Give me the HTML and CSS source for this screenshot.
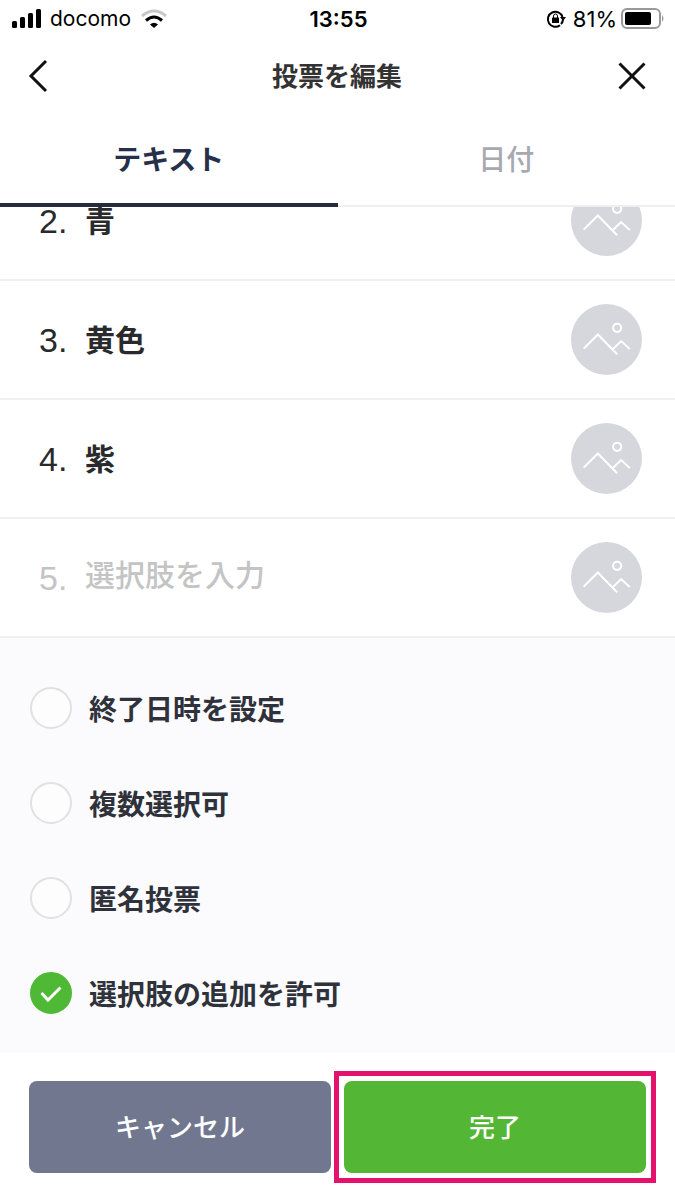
FILE: index.html
```html
<!DOCTYPE html>
<html lang="ja">
<head>
<meta charset="utf-8">
<meta name="viewport" content="width=device-width, initial-scale=1">
<title>投票を編集</title>
<link rel="stylesheet" href="styles.css">
</head>
<body>
<svg class="defs" aria-hidden="true">
  <symbol id="photo" viewBox="0 0 70 70">
    <path d="M12.500 44 26.500 30 45.500 49.500M40.500 45 49.500 36.500 58 44.500"/>
    <circle cx="45.500" cy="23.500" r="4"/>
  </symbol>
</svg>
<div class="app">
  <div class="status">
    <div class="status-side">
      <svg class="signal" viewBox="0 0 30 20" aria-hidden="true">
        <rect x="0" y="12" width="5" height="7" rx="1.500"/><rect x="8" y="8" width="5" height="11" rx="1.500"/><rect x="16" y="4" width="5" height="15" rx="1.500"/><rect x="24" y="0" width="5" height="19" rx="1.500"/>
      </svg>
      <span class="carrier">docomo</span>
      <svg class="wifi" viewBox="0 0 26 20" aria-hidden="true">
        <path class="wifi-off" d="M1 7Q13-3 25 7"/>
        <path class="wifi-on" d="M5 11.500Q13 4.500 21 11.500"/>
        <path d="M13 19 9 15.500Q13 12 17 15.500Z"/>
      </svg>
    </div>
    <time class="clock">13:55</time>
    <div class="status-side status-right">
      <svg class="lock" viewBox="0 0 20 20" aria-hidden="true">
        <path class="line" d="M14 16.200A7.500 7.500 0 1 1 16.500 8"/>
        <path class="line" d="M17 11A7.500 7.500 0 0 1 15 15"/>
        <path d="M14 8H20L17 12Z"/>
        <rect x="6" y="8.500" width="7" height="5.500" rx=".5"/>
        <path class="shackle" d="M7.500 9V7Q7.500 5 9.500 5T11.500 7V9"/>
      </svg>
      <span>81%</span>
      <svg class="battery" viewBox="0 0 44 22" aria-hidden="true">
        <rect class="shell" x="1" y="1" width="38" height="19" rx="5"/>
        <rect x="4" y="4" width="26" height="13" rx="2"/>
        <path class="cap" d="M41 7Q44 10.500 41 14Z"/>
      </svg>
    </div>
  </div>
  <header class="nav">
    <button class="icon-button" type="button" aria-label="戻る"><svg class="back" viewBox="0 0 20 34" aria-hidden="true"><path d="M18 2 3 17 18 32"/></svg></button>
    <h1>投票を編集</h1>
    <button class="icon-button" type="button" aria-label="閉じる"><svg class="close" viewBox="0 0 28 28" aria-hidden="true"><path d="M1.500 1.500 26.500 26.500M26.500 1.500 1.500 26.500"/></svg></button>
  </header>
  <div class="tabs" role="tablist">
    <button class="tab active" type="button" role="tab" aria-selected="true">テキスト</button>
    <button class="tab" type="button" role="tab" aria-selected="false">日付</button>
  </div>
  <main class="choices">
    <div class="choice"><label for="c2">2.</label><input id="c2" type="text" value="青"><button class="photo" type="button" aria-label="画像を追加"><svg><use href="#photo"/></svg></button></div>
    <div class="choice"><label for="c3">3.</label><input id="c3" type="text" value="黄色"><button class="photo" type="button" aria-label="画像を追加"><svg><use href="#photo"/></svg></button></div>
    <div class="choice"><label for="c4">4.</label><input id="c4" type="text" value="紫"><button class="photo" type="button" aria-label="画像を追加"><svg><use href="#photo"/></svg></button></div>
    <div class="choice empty"><label for="c5">5.</label><input id="c5" type="text" placeholder="選択肢を入力"><button class="photo" type="button" aria-label="画像を追加"><svg><use href="#photo"/></svg></button></div>
  </main>
  <section class="options">
    <label class="option"><input type="checkbox"><span>終了日時を設定</span></label>
    <label class="option"><input type="checkbox"><span>複数選択可</span></label>
    <label class="option"><input type="checkbox"><span>匿名投票</span></label>
    <label class="option"><input type="checkbox" checked><span>選択肢の追加を許可</span><svg class="tick" viewBox="0 0 42 42" aria-hidden="true"><path d="M11.500 21 18 28 30.500 15.500"/></svg></label>
  </section>
  <footer class="actions">
    <button class="action cancel" type="button">キャンセル</button>
    <button class="action done" type="button">完了</button>
  </footer>
</div>
</body>
</html>
```

FILE: styles.css
```css
* { box-sizing: border-box; }
body {
  margin: 0;
  background: #fff;
  color: #2a2a2c;
  font-family: "Liberation Sans", "Noto Sans CJK JP", sans-serif;
}
button, input { margin: 0; padding: 0; border: 0; background: none; font: inherit; color: inherit; }
svg { display: block; flex: none; }
.defs { position: absolute; width: 0; height: 0; }
.app { display: flex; flex-direction: column; height: 100vh; }

.status {
  display: grid;
  grid-template-columns: 1fr auto 1fr;
  align-items: center;
  height: 37px;
  padding: 0 10px 0 12px;
  color: #000;
  font: 22px/28px Inter, sans-serif;
}
.status-side { display: flex; align-items: center; gap: 8px; }
.status-right { justify-content: flex-end; gap: 4px; }
.carrier { font-size: 21px; }
.clock { font-weight: 600; }
.signal { width: 30px; height: 20px; }
.wifi { width: 26px; height: 20px; margin-left: 2px; }
.wifi path, .lock path { fill: #000; }
.wifi .wifi-off, .wifi .wifi-on { fill: none; stroke: #000; stroke-width: 3; }
.wifi .wifi-off { stroke: #c8c8c8; }
.lock { width: 20px; height: 20px; margin-right: 3px; }
.lock .line, .lock .shackle { fill: none; stroke: #000; stroke-width: 2; }
.lock .shackle { stroke-width: 1; }
.battery { width: 44px; height: 22px; }
.battery .shell { fill: none; stroke: #999; stroke-width: 2; }
.battery .cap { fill: #999; }

.nav {
  display: flex;
  align-items: center;
  justify-content: space-between;
  height: 77px;
  padding: 0 29px 0 28px;
}
.nav h1 { margin: 0; padding-top: 3px; font-size: 26px; line-height: 40px; font-weight: 700; color: #333; }
.icon-button { display: flex; width: 30px; }
.icon-button:last-child { justify-content: flex-end; }
.icon-button path { fill: none; stroke: #111; stroke-width: 3; }
.back { width: 20px; height: 34px; }
.close { width: 28px; height: 28px; }

.tabs { display: flex; height: 93px; border-bottom: 2px solid #efefef; }
.tab {
  flex: 1;
  height: 93px;
  padding-bottom: 2px;
  border-bottom: 4px solid transparent;
  color: #a8a9ae;
  font-size: 28px;
  font-weight: 500;
}
.tab.active { border-color: #252c3d; color: #26304a; font-weight: 700; }

.choices {
  flex: 1;
  display: flex;
  flex-direction: column;
  justify-content: flex-end;
  min-height: 0;
  overflow: hidden;
}
.choice {
  flex: none;
  display: flex;
  align-items: center;
  height: 119px;
  padding: 0 33px 0 39px;
  border-bottom: 2px solid #f0f0f0;
}
.choice label { width: 46px; font-size: 34px; line-height: 26px; }
.choice input { flex: 1; min-width: 0; height: 48px; padding-bottom: 4px; font-size: 30px; line-height: 44px; font-weight: 700; outline: 0; }
.choice input::placeholder { color: #c4c4c4; opacity: 1; line-height: 44px; font-weight: 500; }
.choice.empty label { color: #c4c4c4; }
.photo { width: 71px; height: 71px; border-radius: 50%; background: #d6d7dc; }
.photo svg { width: 100%; height: 100%; fill: none; stroke: #fff; stroke-width: 2; }

.options { padding: 22px 30px 13px; background: #fbfbfd; }
.option {
  position: relative;
  display: flex;
  align-items: center;
  gap: 17px;
  height: 95px;
  color: #2f323b;
  font-size: 28px;
  font-weight: 700;
}
.option input {
  appearance: none;
  width: 42px;
  height: 42px;
  border: 2px solid #e1e1e4;
  border-radius: 50%;
  background: #fdfdfe;
}
.option input:checked { border-color: #4fb935; background: #4fb935; }
.tick { position: absolute; left: 0; width: 42px; height: 42px; pointer-events: none; fill: none; stroke: #fff; stroke-width: 3; }

.actions { display: flex; gap: 13px; padding: 28px 29px 27px; }
.action {
  flex: 1;
  height: 92px;
  padding-bottom: 3px;
  border-radius: 8px;
  color: #fff;
  font-size: 26px;
  font-weight: 500;
}
.cancel { background: #71778f; }
.done { position: relative; background: #54b635; }
.done::after { content: ""; position: absolute; inset: -10px; border: 5px solid #e5126d; }
```
